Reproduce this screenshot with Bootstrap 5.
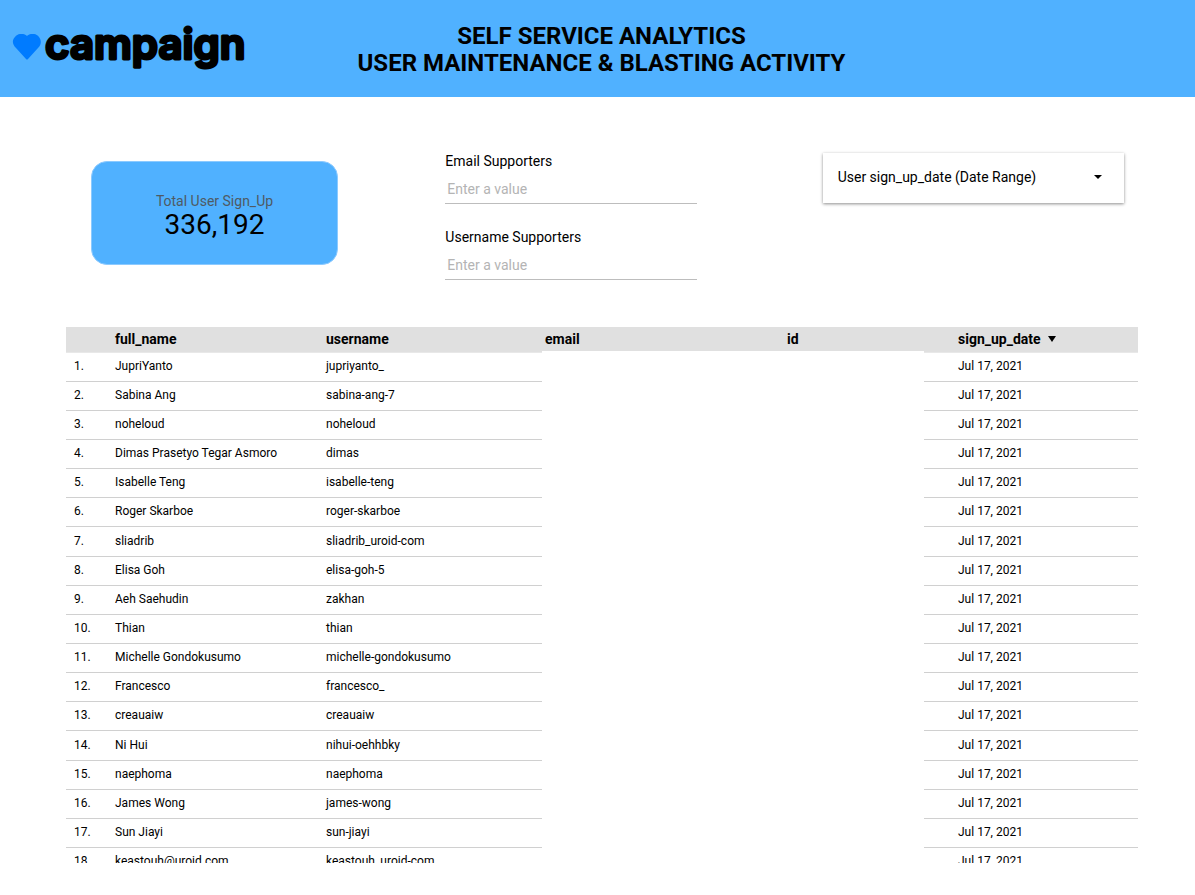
<!DOCTYPE html>
<html lang="en">
<head>
<meta charset="utf-8">
<meta name="viewport" content="width=device-width, initial-scale=1">
<title>Self Service Analytics</title>
<link href="https://cdn.jsdelivr.net/npm/bootstrap@5.3.0/dist/css/bootstrap.min.css" rel="stylesheet">
<style>
  body { font-family: Roboto, sans-serif; font-size: 14px; line-height: 20px; color: #000; }
  .top-bar { display: grid; grid-template-columns: 1fr auto 1fr; min-height: 97px; padding: 0 4px 0 12px; background: #50b1ff; }
  .top-bar h1 { padding-top: 2px; font-size: 24px; line-height: 27px; font-weight: 700; }
  .brand { color: #000; height: 93px; gap: 2px; }
  .brand-name { font-family: Inter, sans-serif; font-weight: 600; font-size: 42px; stroke: #000; stroke-width: 3px; stroke-linejoin: round; }
  .report { padding: 56px 57px 32px 66px; min-height: 0; }
  .filters { min-height: 174px; }
  .score { max-width: 247px; min-height: 104px; margin: 8px 0 0 25px; padding-top: 3px; background: #50b1ff; border: 1px solid #8ccaff; border-radius: 16px; }
  .score-label { color: #4f5a63; }
  .score-value { font-size: 28px; line-height: 28px; }
  .fields { max-width: 252px; margin-left: 22px; gap: 25px; }
  .fields label { line-height: 17px; }
  .fields input { height: 34px; padding: 4px 2px 0; border: 0; border-bottom: 1px solid #bdbdbd; border-radius: 0; font-size: 14px; line-height: 20px; }
  .fields input::placeholder { color: #b4b4b4; }
  .date-range { max-width: 301px; height: 50px; margin-left: 42px; padding: 0 22px 3px 15px; background: #fff; border: 0; box-shadow: 0 1px 3px rgba(0,0,0,.45); color: #000; }
  .records { overflow: hidden; }
  .records table { table-layout: fixed; width: 100%; border-collapse: separate; border-spacing: 0; font-size: 12px; line-height: 16px; }
  .records th { height: 26px; padding: 0 8px 1px; background: #e0e0e0; font-size: 14px; font-weight: 700; border-bottom: 1px solid #e8e8e8; }
  .records td { height: 29px; padding: 0 8px 2px; border-bottom: 1px solid #d0d0d0; white-space: nowrap; }
  .records tr:nth-child(7n) td { height: 30px; }
  .records th.hidden-col { padding: 0 3px 0; border-bottom: 2px solid #fff; }
  .records td.hidden-col { border-bottom-color: #fff; }
  .records .date-col { padding-left: 34px; }
  .col-index { width: 41px; } .col-name { width: 211px; } .col-user { width: 224px; }
  .col-email { width: 242px; } .col-id { width: 140px; }
</style>
</head>
<body class="d-flex flex-column vh-100 overflow-hidden bg-white">
<header class="top-bar">
  <a class="brand d-flex align-items-center text-decoration-none" href="#">
    <svg width="30" height="26" viewBox="0 0 30 26" aria-hidden="true"><path fill="#007bff" d="M15 2C18-1 24-1 27 3c3 4 2 8-1 11L16 25q-1 1-2 0L4 14C0 10 0 6 3 3 6-1 12-1 15 2Z"/></svg>
    <svg width="210" height="60" viewBox="0 0 210 60" role="img" aria-label="campaign"><text class="brand-name" x="1" y="42">campaign</text></svg>
  </a>
  <h1 class="m-0 text-center align-self-center">SELF SERVICE ANALYTICS<br>USER MAINTENANCE &amp; BLASTING ACTIVITY</h1>
</header>
<main class="report d-flex flex-column flex-fill">
  <section class="filters row g-0">
    <div class="col-4">
      <div class="score d-flex flex-column align-items-center justify-content-center">
        <div class="score-label">Total User Sign_Up</div>
        <div class="score-value">336,192</div>
      </div>
    </div>
    <div class="col-4">
      <div class="fields d-flex flex-column">
        <div><label class="d-block" for="email">Email Supporters</label><input class="w-100" id="email" type="text" placeholder="Enter a value"></div>
        <div><label class="d-block" for="username">Username Supporters</label><input class="w-100" id="username" type="text" placeholder="Enter a value"></div>
      </div>
    </div>
    <div class="col-4">
      <button class="date-range w-100 d-flex align-items-center justify-content-between" type="button">
        <span>User sign_up_date (Date Range)</span>
        <svg width="8" height="4" viewBox="0 0 8 4" aria-hidden="true"><path d="M0 0h8L4 4Z"/></svg>
      </button>
    </div>
  </section>
  <section class="records flex-fill">
    <table>
      <colgroup><col class="col-index"><col class="col-name"><col class="col-user"><col class="col-email"><col class="col-id"><col></colgroup>
      <thead><tr><th></th><th>full_name</th><th>username</th><th class="hidden-col">email</th><th class="hidden-col">id</th><th class="date-col">sign_up_date <svg class="ms-1" width="8" height="6" viewBox="0 0 8 6" style="vertical-align:2px" aria-hidden="true"><path d="M0 0h8L4 6Z"/></svg></th></tr></thead>
      <tbody>
        <tr><td>1.</td><td>JupriYanto</td><td>jupriyanto_</td><td class="hidden-col"></td><td class="hidden-col"></td><td class="date-col">Jul 17, 2021</td></tr>
        <tr><td>2.</td><td>Sabina Ang</td><td>sabina-ang-7</td><td class="hidden-col"></td><td class="hidden-col"></td><td class="date-col">Jul 17, 2021</td></tr>
        <tr><td>3.</td><td>noheloud</td><td>noheloud</td><td class="hidden-col"></td><td class="hidden-col"></td><td class="date-col">Jul 17, 2021</td></tr>
        <tr><td>4.</td><td>Dimas Prasetyo Tegar Asmoro</td><td>dimas</td><td class="hidden-col"></td><td class="hidden-col"></td><td class="date-col">Jul 17, 2021</td></tr>
        <tr><td>5.</td><td>Isabelle Teng</td><td>isabelle-teng</td><td class="hidden-col"></td><td class="hidden-col"></td><td class="date-col">Jul 17, 2021</td></tr>
        <tr><td>6.</td><td>Roger Skarboe</td><td>roger-skarboe</td><td class="hidden-col"></td><td class="hidden-col"></td><td class="date-col">Jul 17, 2021</td></tr>
        <tr><td>7.</td><td>sliadrib</td><td>sliadrib_uroid-com</td><td class="hidden-col"></td><td class="hidden-col"></td><td class="date-col">Jul 17, 2021</td></tr>
        <tr><td>8.</td><td>Elisa Goh</td><td>elisa-goh-5</td><td class="hidden-col"></td><td class="hidden-col"></td><td class="date-col">Jul 17, 2021</td></tr>
        <tr><td>9.</td><td>Aeh Saehudin</td><td>zakhan</td><td class="hidden-col"></td><td class="hidden-col"></td><td class="date-col">Jul 17, 2021</td></tr>
        <tr><td>10.</td><td>Thian</td><td>thian</td><td class="hidden-col"></td><td class="hidden-col"></td><td class="date-col">Jul 17, 2021</td></tr>
        <tr><td>11.</td><td>Michelle Gondokusumo</td><td>michelle-gondokusumo</td><td class="hidden-col"></td><td class="hidden-col"></td><td class="date-col">Jul 17, 2021</td></tr>
        <tr><td>12.</td><td>Francesco</td><td>francesco_</td><td class="hidden-col"></td><td class="hidden-col"></td><td class="date-col">Jul 17, 2021</td></tr>
        <tr><td>13.</td><td>creauaiw</td><td>creauaiw</td><td class="hidden-col"></td><td class="hidden-col"></td><td class="date-col">Jul 17, 2021</td></tr>
        <tr><td>14.</td><td>Ni Hui</td><td>nihui-oehhbky</td><td class="hidden-col"></td><td class="hidden-col"></td><td class="date-col">Jul 17, 2021</td></tr>
        <tr><td>15.</td><td>naephoma</td><td>naephoma</td><td class="hidden-col"></td><td class="hidden-col"></td><td class="date-col">Jul 17, 2021</td></tr>
        <tr><td>16.</td><td>James Wong</td><td>james-wong</td><td class="hidden-col"></td><td class="hidden-col"></td><td class="date-col">Jul 17, 2021</td></tr>
        <tr><td>17.</td><td>Sun Jiayi</td><td>sun-jiayi</td><td class="hidden-col"></td><td class="hidden-col"></td><td class="date-col">Jul 17, 2021</td></tr>
        <tr><td>18.</td><td>keastouh@uroid.com</td><td>keastouh_uroid-com</td><td class="hidden-col"></td><td class="hidden-col"></td><td class="date-col">Jul 17, 2021</td></tr>
      </tbody>
    </table>
  </section>
</main>
<script src="https://cdn.jsdelivr.net/npm/bootstrap@5.3.0/dist/js/bootstrap.bundle.min.js"></script>
</body>
</html>
